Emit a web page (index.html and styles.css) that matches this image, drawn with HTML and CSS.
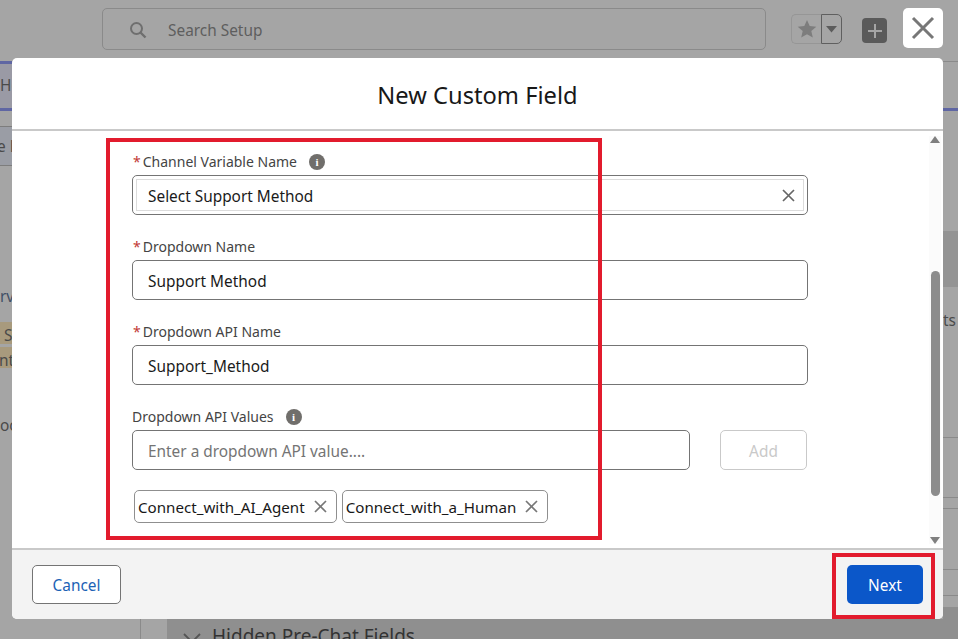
FILE: index.html
```html
<!DOCTYPE html>
<html lang="en">
<head>
    <meta charset="UTF-8">
    <title>New Custom Field</title>
    <link rel="stylesheet" href="styles.css">
</head>
<body>

<div class="page">
    <div class="topbar">
        <div class="search">
            <svg class="search-icon" width="18" height="18" viewBox="0 0 18 18"><circle cx="7.500" cy="7.500" r="5.500" fill="none" stroke="#6f6f6f" stroke-width="2"/><path d="M11.500 11.500l5 5" stroke="#6f6f6f" stroke-width="2.400"/></svg>
            <span>Search Setup</span>
        </div>
        <div class="fav">
            <div class="fav-star"><svg width="20" height="20" viewBox="0 0 20 20"><path d="M10 1l2.700 6.100 6.600.6-5 4.400 1.500 6.500L10 15.200l-5.800 3.400 1.500-6.500-5-4.400 6.600-.6z" fill="#7d7d7d"/></svg></div>
            <div class="fav-menu"><svg width="12" height="8" viewBox="0 0 12 8"><path d="M0 1h11L5.500 7.500z" fill="#5c5c5c"/></svg></div>
        </div>
        <div class="plus"><svg width="16" height="16" viewBox="0 0 16 16"><path d="M8 1v14M1 8h14" stroke="#a5a5a5" stroke-width="2"/></svg></div>
    </div>

    <!-- bits of the page behind the dialog -->
    <div class="side-strip"></div>
    <div class="behind behind-tab">Ho</div>
    <div class="behind behind-tab2">e D</div>
    <div class="behind behind-serv">rv</div>
    <div class="behind behind-s">S</div>
    <div class="behind behind-nts">nts</div>
    <div class="behind behind-oc">oc</div>
    <div class="behind behind-ts">ts</div>
    <div class="behind-gutter"></div>
    <div class="behind-panel">
        <svg width="18" height="10" viewBox="0 0 18 10"><path d="M1 1l8 8 8-8" fill="none" stroke="#555" stroke-width="1.800"/></svg>
        <span>Hidden Pre-Chat Fields</span>
    </div>
</div>

<button class="close-modal">
    <svg width="24" height="24" viewBox="0 0 24 24"><path d="M2 2l20 20M22 2L2 22" stroke="#777" stroke-width="3"/></svg>
</button>

<div class="modal">
    <div class="modal-header">New Custom Field</div>

    <div class="modal-body">
        <div class="form">
            <div class="field">
                <label><span class="req">*</span>Channel Variable Name<i class="info">i</i></label>
                <div class="input selected-input">
                    <div class="selected-inner">
                        <span>Select Support Method</span>
                        <svg width="13" height="13" viewBox="0 0 13 13"><path d="M1 1l11 11M12 1L1 12" stroke="#666" stroke-width="1.700"/></svg>
                    </div>
                </div>
            </div>
            <div class="field">
                <label><span class="req">*</span>Dropdown Name</label>
                <div class="input">Support Method</div>
            </div>
            <div class="field">
                <label><span class="req">*</span>Dropdown API Name</label>
                <div class="input">Support_Method</div>
            </div>
            <div class="field">
                <label>Dropdown API Values<i class="info">i</i></label>
                <div class="add-row">
                    <div class="input placeholder">Enter a dropdown API value....</div>
                    <button class="btn-add">Add</button>
                </div>
            </div>
            <div class="pills">
                <div class="pill">Connect_with_AI_Agent
                    <svg width="13" height="13" viewBox="0 0 13 13"><path d="M1 1l11 11M12 1L1 12" stroke="#777" stroke-width="1.700"/></svg>
                </div>
                <div class="pill">Connect_with_a_Human
                    <svg width="13" height="13" viewBox="0 0 13 13"><path d="M1 1l11 11M12 1L1 12" stroke="#777" stroke-width="1.700"/></svg>
                </div>
            </div>
        </div>
        <div class="scrollbar">
            <svg width="10" height="7" viewBox="0 0 10 7"><path d="M5 0l5 7H0z" fill="#7f7f7f"/></svg>
            <div class="thumb"></div>
            <svg width="10" height="7" viewBox="0 0 10 7"><path d="M0 0h10L5 7z" fill="#7f7f7f"/></svg>
        </div>
        <div class="highlight highlight-form"></div>
    </div>

    <div class="modal-footer">
        <button class="btn-cancel">Cancel</button>
        <button class="btn-next">Next</button>
        <div class="highlight highlight-next"></div>
    </div>
</div>

</body>
</html>
```

FILE: styles.css
```css
* {
    box-sizing: border-box;
}
html, body {
    margin: 0;
    padding: 0;
    height: 100%;
}
body {
    font-family: "Noto Sans", Arial, sans-serif;
    font-size: 15.4px;
    color: #1a1a1a;
    background-color: #a5a5a5;
    overflow: hidden;
}
button {
    font-family: inherit;
    font-size: 15.4px;
    padding: 2px 0 0;
}
.page {
    position: relative;
    width: 958px;
    height: 639px;
}
.topbar {
    display: flex;
    align-items: flex-start;
    padding: 8px 0 0 102px;
}
.search {
    width: 664px;
    height: 42px;
    border: 1px solid #8a8a8a;
    border-radius: 5px;
    display: flex;
    align-items: center;
    padding: 2px 0 0 26px;
    color: #5e5e5e;
    gap: 21px;
}
.fav {
    display: flex;
    margin: 6px 0 0 25px;
    height: 30px;
}
.fav-star {
    width: 30px;
    border: 1px solid #969696;
    border-right: none;
    border-radius: 5px 0 0 5px;
    display: flex;
    align-items: center;
    justify-content: center;
}
.fav-menu {
    width: 21px;
    border: 1px solid #5f5f5f;
    border-radius: 0 5px 5px 0;
    display: flex;
    align-items: center;
    justify-content: center;
}
.plus {
    width: 25px;
    height: 25px;
    margin: 10px 0 0 20px;
    background-color: #5a5a5a;
    border-radius: 4px;
    display: flex;
    align-items: center;
    justify-content: center;
}
.side-strip {
    position: absolute;
    left: 943px;
    top: 0;
    width: 15px;
    height: 639px;
    background: linear-gradient(to bottom,
        #a5a5a5 0 61px, #8a8a8a 61px 62px, #a5a5a5 62px 108px,
        #5f66a3 108px 111px, #a5a5a5 111px 231px,
        #949494 231px 287px, #a5a5a5 287px 437px,
        #8a8a8a 437px 438px, #a5a5a5 438px 497px,
        #8a8a8a 497px 498px, #a5a5a5 498px 508px,
        #8a8a8a 508px 509px, #a5a5a5 509px 569px,
        #8a8a8a 569px 570px, #a5a5a5 570px 595px,
        #8a8a8a 595px 596px, #a5a5a5 596px 607px,
        #8f8f8f 607px 639px);
}
.behind {
    position: absolute;
    color: #4a4a4a;
    line-height: 22px;
    white-space: nowrap;
    overflow: hidden;
}
.behind-tab {
    left: 0;
    top: 61px;
    width: 12px;
    height: 50px;
    padding-top: 11px;
    background-color: #9a9aa5;
    border-top: 3px solid #5f66a3;
    border-bottom: 3px solid #5f66a3;
}
.behind-tab2 {
    left: 0;
    top: 126px;
    width: 12px;
    height: 40px;
    padding-top: 9px;
    text-indent: -3px;
    background-color: #9a9da5;
    border-top: 1px solid #7d7d7d;
    border-bottom: 1px solid #7d7d7d;
}
.behind-serv {
    left: 0;
    top: 286px;
    color: #3f4f66;
    width: 12px;
}
.behind-s {
    left: 0;
    top: 322px;
    width: 12px;
    height: 22px;
    padding: 3px 0 0 4px;
    background-color: #a89a7d;
}
.behind-nts {
    left: 0;
    top: 347px;
    width: 12px;
    height: 21px;
    padding-top: 3px;
    text-indent: -1px;
    background-color: #a89a7d;
}
.behind-oc {
    left: 0;
    top: 415px;
    width: 12px;
}
.behind-ts {
    left: 943px;
    top: 310px;
}
.behind-gutter {
    position: absolute;
    left: 140px;
    top: 619px;
    width: 27px;
    height: 20px;
    border-left: 1px solid #8a8a8a;
}
.behind-panel {
    position: absolute;
    left: 167px;
    top: 619px;
    width: 776px;
    height: 20px;
    padding: 4px 0 0 16px;
    background-color: #8f8f8f;
    display: flex;
    gap: 11px;
    font-size: 19px;
    line-height: 26px;
    color: #333;
    overflow: hidden;
}
.behind-panel svg {
    margin-top: 10px;
}
.close-modal {
    position: absolute;
    left: 903px;
    top: 8px;
    width: 40px;
    height: 40px;
    border: none;
    padding: 0;
    border-radius: 5px;
    background-color: #ffffff;
    display: flex;
    align-items: center;
    justify-content: center;
}
.modal {
    position: absolute;
    left: 12px;
    top: 58px;
    width: 931px;
    height: 561px;
    background-color: #ffffff;
    border-radius: 5px;
    display: flex;
    flex-direction: column;
    overflow: hidden;
}
.modal-header {
    height: 73px;
    flex-shrink: 0;
    border-bottom: 2px solid #c9c9c9;
    text-align: center;
    font-size: 23.7px;
    line-height: 75px;
    color: #181818;
}
.modal-body {
    position: relative;
    flex: 1;
    padding: 19px 0 0 120px;
    min-height: 0;
}
.form {
    width: 676px;
}
.field {
    margin-bottom: 20px;
}
.field label {
    display: flex;
    align-items: center;
    height: 22px;
    margin-bottom: 3px;
    font-size: 14px;
    color: #444444;
}
.req {
    color: #c23934;
    margin: 0 2px 0 1px;
}
.info {
    display: inline-block;
    width: 16px;
    height: 16px;
    margin: 2px 0 0 12px;
    border-radius: 50%;
    background-color: #706e6b;
    color: #ffffff;
    font: bold 11px/16px "Liberation Serif", serif;
    text-align: center;
}
.input {
    height: 40px;
    border: 1px solid #747474;
    border-radius: 5px;
    padding: 1px 0 0 15px;
    line-height: 40px;
    background-color: #ffffff;
}
.selected-input {
    padding: 3px;
}
.selected-inner {
    height: 32px;
    border: 1px solid #dcdcdc;
    padding: 3px 11px 0;
    line-height: 28px;
    display: flex;
    justify-content: space-between;
    align-items: center;
}
.selected-inner svg {
    margin: -2px -3px 0 0;
}
.add-row {
    display: flex;
    justify-content: space-between;
    padding-right: 1px;
}
.add-row .input {
    width: 558px;
}
.placeholder {
    color: #747474;
}
.btn-add {
    width: 87px;
    height: 40px;
    background-color: #ffffff;
    color: #c9c9c9;
    border: 1px solid #c9c9c9;
    border-radius: 5px;
}
.pills {
    display: flex;
    gap: 5px;
    margin-left: 2px;
}
.pill {
    height: 33px;
    border: 1px solid #8f8f8f;
    border-radius: 5px;
    padding: 0 9px 0 3px;
    display: flex;
    align-items: center;
    gap: 9px;
    color: #181818;
    font-size: 15.15px;
}
.scrollbar {
    position: absolute;
    right: 2px;
    top: 5px;
    bottom: 4px;
    width: 12px;
    background-color: #fbfbfb;
    display: flex;
    flex-direction: column;
    align-items: center;
    justify-content: space-between;
}
.thumb {
    position: absolute;
    top: 135px;
    left: 2px;
    width: 9px;
    height: 225px;
    border-radius: 5px;
    background-color: #8c8c8c;
}
.highlight {
    position: absolute;
    border: 4px solid #e21b2d;
    pointer-events: none;
}
.highlight-form {
    left: 94px;
    top: 7px;
    width: 496px;
    height: 402px;
}
.modal-footer {
    position: relative;
    height: 71px;
    flex-shrink: 0;
    background-color: #f3f3f3;
    border-top: 2px solid #c9c9c9;
    display: flex;
    justify-content: space-between;
    align-items: flex-start;
    padding: 15px 20px 0;
}
.btn-cancel {
    width: 89px;
    height: 39px;
    background-color: #ffffff;
    color: #1b62b5;
    border: 1px solid #747474;
    border-radius: 5px;
}
.btn-next {
    width: 76px;
    height: 39px;
    background-color: #0b57c9;
    color: #ffffff;
    border: none;
    border-radius: 5px;
}
.highlight-next {
    right: 8px;
    top: 3px;
    width: 103px;
    height: 66px;
}
```
